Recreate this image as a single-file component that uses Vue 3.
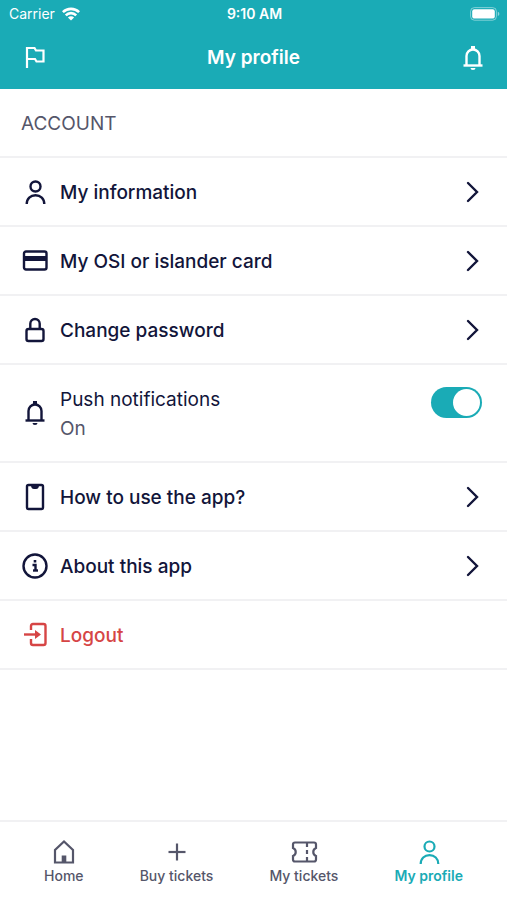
<template>
  <div class="app">
    <header class="header">
      <div class="status">
        <span class="carrier">
          Carrier
          <svg width="18" height="14" viewBox="0 0 18 14" aria-hidden="true">
            <g fill="none" stroke="currentColor" stroke-width="2.6">
              <path d="M.9 5.2a11.5 11.5 0 0 1 16.2 0" />
              <path d="M3.8 8.3a7.4 7.4 0 0 1 10.4 0" />
            </g>
            <path d="M9 13.6 5.9 10.5a4.4 4.4 0 0 1 6.2 0z" fill="currentColor" />
          </svg>
        </span>
        <time class="time">9:10 AM</time>
        <svg class="battery" width="30" height="14" viewBox="0 0 30 14" aria-hidden="true">
          <rect x=".6" y=".6" width="25.8" height="12.6" rx="3.8" fill="none" stroke="#fff" stroke-opacity=".45" />
          <rect x="2.2" y="2.2" width="22.6" height="9.4" rx="2.2" fill="#fff" />
          <path d="M27.8 4.8v4.2q1.6-.6 1.6-2.1t-1.6-2.1z" fill="#fff" fill-opacity=".5" />
        </svg>
      </div>
      <div class="title-bar">
        <button class="icon-button" type="button" aria-label="Report">
          <svg width="28" height="28" viewBox="0 0 28 28" aria-hidden="true">
            <path d="M7 24V4h7.5L16 6.5h7.5v11h-7L15 15H7" fill="none" stroke="currentColor" stroke-width="2.2" />
          </svg>
        </button>
        <h1>My profile</h1>
        <button class="icon-button" type="button" aria-label="Notifications">
          <svg width="28" height="28" viewBox="0 0 28 28" aria-hidden="true">
            <g fill="none" stroke="currentColor" stroke-width="2.4">
              <path v-for="d in icons.bell" :key="d" :d="d" />
            </g>
            <path :d="fills.bell" fill="currentColor" />
          </svg>
        </button>
      </div>
    </header>

    <main class="content">
      <h2 class="section">Account</h2>
      <ul class="list">
        <li v-for="item in items" :key="item.label">
          <component
            :is="item.toggle ? 'label' : 'button'"
            class="row"
            :class="{ danger: item.danger, 'row-toggle': item.toggle }"
            :type="item.toggle ? undefined : 'button'"
          >
            <svg class="row-icon" viewBox="0 0 28 28" aria-hidden="true">
              <g fill="none" stroke="currentColor" stroke-width="2.4">
                <path v-for="d in icons[item.icon]" :key="d" :d="d" />
              </g>
              <path v-if="fills[item.icon]" :d="fills[item.icon]" fill="currentColor" />
            </svg>
            <span class="label">
              {{ item.label }}
              <span v-if="item.toggle" class="state">{{ push ? 'On' : 'Off' }}</span>
            </span>
            <input v-if="item.toggle" v-model="push" class="switch" type="checkbox" role="switch" />
            <svg v-else-if="!item.danger" class="chevron" viewBox="0 0 14 22" aria-hidden="true">
              <path d="m2 2 9 9-9 9" fill="none" stroke="currentColor" stroke-width="2.4" stroke-linecap="round" />
            </svg>
          </component>
        </li>
      </ul>
    </main>

    <nav class="tabs">
      <a v-for="tab in tabs" :key="tab.label" href="#" :class="{ active: tab.active }">
        <svg width="28" height="28" viewBox="0 0 28 28" aria-hidden="true">
          <g fill="none" stroke="currentColor" stroke-width="2.2">
            <path v-for="d in icons[tab.icon]" :key="d" :d="d" />
          </g>
          <path v-if="fills[tab.icon]" :d="fills[tab.icon]" fill="currentColor" />
        </svg>
        {{ tab.label }}
      </a>
    </nav>
  </div>
</template>

<script setup>
import { ref } from 'vue'

const push = ref(true)

const icons = {
  user: ['M14.5 3.5a5 5 0 1 0 0 10a5 5 0 1 0 0-10z', 'M5.7 26c0-5.5 3.8-8.8 8.8-8.8s8.8 3.3 8.8 8.8'],
  card: ['M5 4.5h18.5a2 2 0 0 1 2 2v14a2 2 0 0 1-2 2H5a2 2 0 0 1-2-2v-14a2 2 0 0 1 2-2z'],
  lock: [
    'M7.5 13h13a2 2 0 0 1 2 2v8a2 2 0 0 1-2 2h-13a2 2 0 0 1-2-2v-8a2 2 0 0 1 2-2z',
    'M9.3 13V7.700a4.700 4.700 0 0 1 9.400 0V13'
  ],
  bell: ['M7.5 21.5V12a6.500 6.500 0 0 1 13 0v9.500', 'M4.500 21.500h19'],
  phone: ['M7.500 2h13q1.500 0 1.500 1.500v21q0 1.500-1.500 1.500h-13Q6 26 6 24.500v-21Q6 2 7.500 2z'],
  info: ['M14 2.500a11.500 11.500 0 1 0 0 23a11.500 11.500 0 1 0 0-23z', 'M11.500 13h3v6', 'M12 18.500h5'],
  logout: ['M10 9V5q0-2 2-2h10.500q2 0 2 2v17q0 2-2 2H12q-2 0-2-2v-4', 'M3 13.500h13'],
  home: ['M5 24.500V12l9-8.500 9 8.500v12.500z'],
  plus: ['M14 5.500v17', 'M5.500 14h17'],
  ticket: [
    'M5 4.500h19q2 0 2 2V10a4.300 4.300 0 0 0 0 8v3.500q0 2-2 2H5q-2 0-2-2V18a4.300 4.300 0 0 0 0-8V6.500q0-2 2-2z',
    'M17 5v4M17 12v4M17 19v4'
  ]
}

const fills = {
  bell: 'M12 2h4v4h-4zM11.500 24h5a2.500 2 0 0 1-5 0z',
  card: 'M2.500 9h23.500v5H2.500z',
  phone: 'M10 2h8q0 4-3 4h-2q-3 0-3-4z',
  info: 'M12.700 8h2.600v2.500h-2.600z',
  logout: 'm14 9 6 4.500-6 4.500z',
  home: 'M11.700 17.500h4.600v7h-4.600z'
}

const items = [
  { label: 'My information', icon: 'user' },
  { label: 'My OSI or islander card', icon: 'card' },
  { label: 'Change password', icon: 'lock' },
  { label: 'Push notifications', icon: 'bell', toggle: true },
  { label: 'How to use the app?', icon: 'phone' },
  { label: 'About this app', icon: 'info' },
  { label: 'Logout', icon: 'logout', danger: true }
]

const tabs = [
  { label: 'Home', icon: 'home' },
  { label: 'Buy tickets', icon: 'plus' },
  { label: 'My tickets', icon: 'ticket' },
  { label: 'My profile', icon: 'user', active: true }
]
</script>

<style>
body {
  margin: 0;
}
</style>

<style scoped>
.app {
  --teal: #1aabb6;
  --ink: #12153a;
  --muted: #55566a;
  --line: #f1f1f3;
  display: flex;
  flex-direction: column;
  min-height: 100vh;
  background: #fff;
  color: var(--ink);
  font-family: Inter, "Liberation Sans", sans-serif;
}

button {
  border: none;
  background: none;
  color: inherit;
  font: inherit;
  cursor: pointer;
}

svg {
  display: block;
  flex: none;
}

/* --- Header --- */
.header {
  background: var(--teal);
  color: #fff;
  padding-bottom: 17px;
}

.status {
  display: grid;
  grid-template-columns: 1fr auto 1fr;
  align-items: center;
  height: 27px;
  padding: 0 7px 0 9px;
  font-size: 14px;
}

.carrier {
  display: flex;
  align-items: center;
  gap: 7px;
}

.time {
  font-weight: 600;
}

.battery {
  justify-self: end;
}

.title-bar {
  display: flex;
  align-items: center;
  justify-content: space-between;
  padding: 16px 20px 0;
}

h1 {
  margin: 0;
  font-size: 19px;
  line-height: 29px;
  font-weight: 600;
}

.icon-button {
  padding: 0;
}

/* --- List --- */
.content {
  flex: 1;
}

.section {
  margin: 0;
  padding: 20px 21px 18px;
  line-height: 29px;
  font-size: 19px;
  font-weight: 400;
  color: var(--muted);
  text-transform: uppercase;
  border-bottom: 2px solid var(--line);
}

.list {
  margin: 0;
  padding: 0;
  list-style: none;
}

.list li {
  border-bottom: 2px solid var(--line);
}

.row {
  display: flex;
  align-items: center;
  gap: 11px;
  box-sizing: border-box;
  width: 100%;
  padding: 18px 27px 18px 21px;
  font-size: 19px;
  line-height: 29px;
  font-weight: 500;
  text-align: left;
}

.row-toggle {
  padding-right: 25px;
  font-weight: 400;
  cursor: pointer;
}

.row-icon {
  width: 28px;
  height: 28px;
}

.label {
  flex: 1;
  padding-top: 2px;
}

.state {
  display: block;
  color: var(--muted);
}

.chevron {
  width: 14px;
  height: 22px;
}

.danger {
  color: #d64545;
}

.switch {
  appearance: none;
  align-self: flex-start;
  display: flex;
  box-sizing: border-box;
  width: 51px;
  height: 31px;
  margin: 4px 0 0;
  padding: 2px;
  border-radius: 16px;
  background: #c9cad1;
  cursor: pointer;
}

.switch::before {
  content: "";
  width: 27px;
  height: 27px;
  border-radius: 50%;
  background: #fff;
}

.switch:checked {
  justify-content: flex-end;
  background: var(--teal);
}

/* --- Bottom tabs --- */
.tabs {
  display: flex;
  justify-content: space-around;
  padding: 16px 16px 14px;
  border-top: 2px solid var(--line);
}

.tabs a {
  display: flex;
  flex-direction: column;
  align-items: center;
  color: var(--muted);
  font-size: 14px;
  line-height: 20px;
  font-weight: 500;
  text-decoration: none;
}

.tabs .active {
  color: var(--teal);
  font-weight: 600;
}
</style>
